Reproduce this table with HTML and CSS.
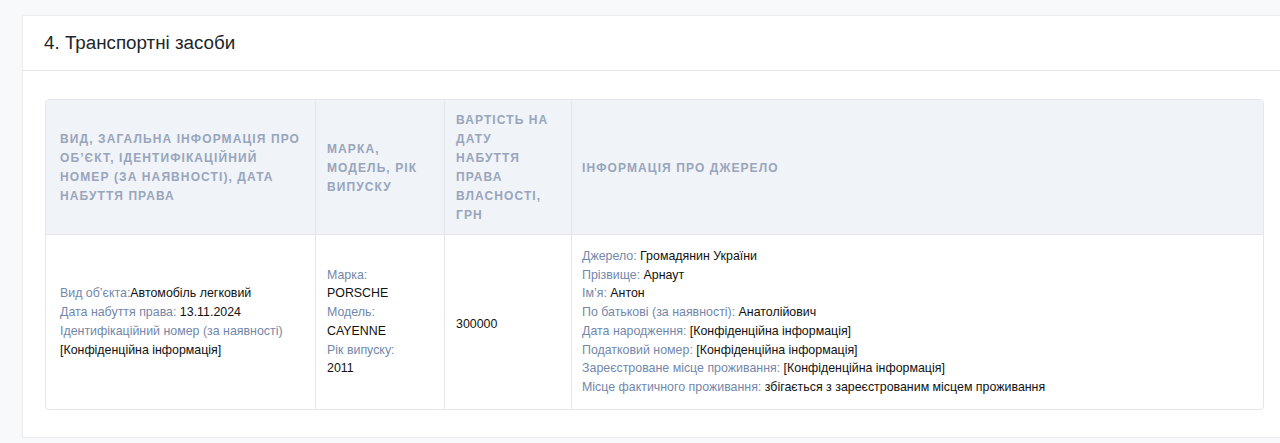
FILE: index.html
```html
<!DOCTYPE html>
<html lang="uk">
<head>
<meta charset="utf-8">
<link rel="stylesheet" href="styles.css">
</head>
<body>
<section class="card">
  <div class="card-header">4. Транспортні засоби</div>
  <div class="card-body">
    <table class="tbl">
      <colgroup>
        <col class="c1"><col class="c2"><col class="c3"><col class="c4">
      </colgroup>
      <thead>
        <tr>
          <th>Вид, загальна інформація про об’єкт, ідентифікаційний номер (за наявності), дата набуття права</th>
          <th>Марка, модель, рік випуску</th>
          <th>Вартість на дату набуття права власності, грн</th>
          <th>Інформація про джерело</th>
        </tr>
      </thead>
      <tbody>
        <tr>
          <td>
            <div><span class="lbl">Вид об’єкта:</span>Автомобіль легковий</div>
            <div><span class="lbl">Дата набуття права:</span> 13.11.2024</div>
            <div><span class="lbl">Ідентифікаційний номер (за наявності)</span></div>
            <div>[Конфіденційна інформація]</div>
          </td>
          <td>
            <div class="lbl">Марка:</div>
            <div>PORSCHE</div>
            <div class="lbl">Модель:</div>
            <div>CAYENNE</div>
            <div class="lbl">Рік випуску:</div>
            <div>2011</div>
          </td>
          <td class="num">300000</td>
          <td>
            <div><span class="lbl">Джерело:</span> Громадянин України</div>
            <div><span class="lbl">Прізвище:</span> Арнаут</div>
            <div><span class="lbl">Ім’я:</span> Антон</div>
            <div><span class="lbl">По батькові (за наявності):</span> Анатолійович</div>
            <div><span class="lbl">Дата народження:</span> [Конфіденційна інформація]</div>
            <div><span class="lbl">Податковий номер:</span> [Конфіденційна інформація]</div>
            <div><span class="lbl">Зареєстроване місце проживання:</span> [Конфіденційна інформація]</div>
            <div><span class="lbl">Місце фактичного проживання:</span> збігається з зареєстрованим місцем проживання</div>
          </td>
        </tr>
      </tbody>
    </table>
  </div>
</section>
</body>
</html>
```

FILE: styles.css
```css
html, body {
  margin: 0;
  padding: 0;
}
body {
  background: #f8f9fa;
  font-family: "Liberation Sans", Arial, sans-serif;
  color: #1a1a1a;
  padding: 15px 0 0 22px;
  height: 443px;
  box-sizing: border-box;
  overflow: hidden;
}
.card {
  width: 1290px;
  background: #fff;
  border: 1px solid #eceef1;
  box-shadow: 0 0 3px rgba(0,0,0,0.03);
  box-sizing: border-box;
}
.card-header {
  height: 55px;
  padding: 0 21px;
  display: flex;
  align-items: center;
  font-size: 18.8px;
  color: #212529;
  border-bottom: 1px solid #e6e8eb;
  box-sizing: border-box;
}
.card-body {
  padding: 28px 0 27px 22px;
}
.tbl {
  width: 1219px;
  border-collapse: separate;
  border-spacing: 0;
  border: 1px solid #e3e6ea;
  border-radius: 4px;
  table-layout: fixed;
  font-size: 12.4px;
  overflow: hidden;
}
.c1 { width: 270px; }
.c2 { width: 129px; }
.c3 { width: 127px; }
.c4 { width: auto; }
.tbl th {
  background: #f0f3f7;
  color: #98a5bc;
  font-weight: bold;
  font-size: 12px;
  text-transform: uppercase;
  letter-spacing: 1.1px;
  text-align: left;
  line-height: 19px;
  padding: 11px 12px 9px 11px;
  vertical-align: middle;
  border-bottom: 1px solid #e3e6ea;
  border-right: 1px solid #e3e6ea;
  height: 134px;
  box-sizing: border-box;
}
.tbl td {
  line-height: 18.7px;
  padding: 12px 12px 12px 11px;
  vertical-align: middle;
  border-right: 1px solid #e3e6ea;
  color: #111;
}
.tbl td.num {
  padding-top: 17px;
}
.tbl th:first-child, .tbl td:first-child {
  padding-left: 14px;
}
.tbl th:last-child, .tbl td:last-child {
  border-right: none;
  padding-left: 10px;
}
.lbl {
  color: #7387ab;
}
```
